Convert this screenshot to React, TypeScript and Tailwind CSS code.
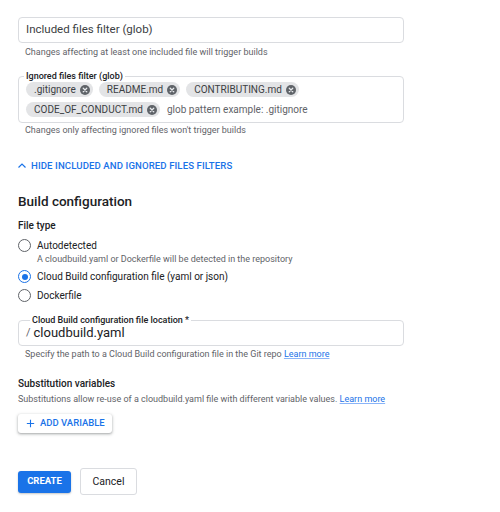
import { useState } from 'react';

const chips = ['.gitignore', 'README.md', 'CONTRIBUTING.md', 'CODE_OF_CONDUCT.md'];

function ChipClose() {
  return (
    <svg viewBox="0 0 16 16" className="h-[10px] w-[10px]">
      <circle cx="8" cy="8" r="8" fill="#5f6368" />
      <path d="M5.2 5.2 L10.8 10.8 M10.8 5.2 L5.2 10.8" stroke="#e8eaed" strokeWidth="2" strokeLinecap="round" />
    </svg>
  );
}

function Radio({ checked }: { checked: boolean }) {
  return (
    <span
      className={
        'flex h-[13px] w-[13px] shrink-0 items-center justify-center rounded-full border-[1.5px] ' +
        (checked ? 'border-[#1a73e8]' : 'border-[#5f6368]')
      }
    >
      {checked && <span className="h-[6px] w-[6px] rounded-full bg-[#1a73e8]" />}
    </span>
  );
}

export default function App() {
  const [fileType, setFileType] = useState('config');

  const options = [
    { id: 'auto', label: 'Autodetected', hint: 'A cloudbuild.yaml or Dockerfile will be detected in the repository' },
    { id: 'config', label: 'Cloud Build configuration file (yaml or json)' },
    { id: 'docker', label: 'Dockerfile' }
  ];

  return (
    <div className="h-[512px] w-[500px] bg-white pl-[18px] pt-[17px] text-[#202124]" style={{ fontFamily: 'Roboto, Arial, sans-serif' }}>
      <div className="w-[386px]">
        {/* included filter */}
        <div className="flex h-[26px] items-center rounded-[4px] border border-[#dadce0] px-[7px] text-[11.5px] text-[#3c4043]">
          Included files filter (glob)
        </div>
        <p className="mt-[3px] pl-[7px] text-[9px] leading-[12px] text-[#5f6368]">
          Changes affecting at least one included file will trigger builds
        </p>

        {/* ignored filter */}
        <div className="relative mt-[18px] rounded-[4px] border border-[#dadce0] px-[7px] pt-[5px] pb-[5px]">
          <span className="absolute -top-[6px] left-[5px] bg-white px-[2px] text-[9px] font-medium leading-[11px] text-[#202124]">
            Ignored files filter (glob)
          </span>
          <div className="flex flex-wrap items-center gap-x-[6px] gap-y-[5px]">
            {chips.map((c) => (
              <span key={c} className="flex h-[15px] items-center gap-[4px] rounded-full bg-[#e3e4e6] pl-[8px] pr-[3px] text-[10px] text-[#3c4043]">
                {c}
                <ChipClose />
              </span>
            ))}
            <span className="ml-[1px] text-[10px] text-[#5f6368]">glob pattern example: .gitignore</span>
          </div>
        </div>
        <p className="mt-[1px] pl-[7px] text-[9px] leading-[12px] text-[#5f6368]">
          Changes only affecting ignored files won't trigger builds
        </p>

        {/* toggle link */}
        <button className="mt-[23px] flex items-center gap-[3px] text-[9.6px] font-medium leading-[13px] tracking-[0.1px] text-[#1a73e8]">
          <svg viewBox="0 0 24 24" className="-ml-[2px] h-[12px] w-[12px]" fill="none" stroke="#1a73e8" strokeWidth="2.4">
            <path d="M5 15 L12 8 L19 15" />
          </svg>
          HIDE INCLUDED AND IGNORED FILES FILTERS
        </button>

        {/* build config */}
        <h2 className="mt-[20px] text-[13.5px] font-medium leading-[18px] text-[#202124]">Build configuration</h2>
        <p className="mt-[9px] text-[10px] font-medium leading-[13px]">File type</p>

        <div className="mt-[4px] flex flex-col">
          {options.map((o) => (
            <label key={o.id} onClick={() => setFileType(o.id)} className="flex items-start gap-[6px] py-[2.5px]">
              <span className="flex h-[14px] items-center">
                <Radio checked={fileType === o.id} />
              </span>
              <span className="flex flex-col">
                <span className="text-[10px] leading-[14px] text-[#202124]">{o.label}</span>
                {o.hint && <span className="text-[9px] leading-[12px] text-[#5f6368]">{o.hint}</span>}
              </span>
            </label>
          ))}
        </div>

        {/* location */}
        <div className="relative mt-[15px] flex h-[26px] items-center rounded-[4px] border border-[#dadce0] px-[7px]">
          <span className="absolute -top-[6px] left-[11px] bg-white px-[2px] text-[9px] font-medium leading-[11px] text-[#202124]">
            Cloud Build configuration file location *
          </span>
          <span className="mr-[3px] text-[11px] text-[#5f6368]">/</span>
          <span className="text-[13px] text-[#202124]">cloudbuild.yaml</span>
        </div>
        <p className="mt-[2px] pl-[7px] text-[9px] leading-[12px] text-[#5f6368]">
          Specify the path to a Cloud Build configuration file in the Git repo{' '}
          <a className="text-[#1a73e8] underline decoration-[#8ab4f8]">Learn more</a>
        </p>

        {/* substitution */}
        <p className="mt-[17px] text-[10px] font-medium leading-[13px]">Substitution variables</p>
        <p className="mt-[3px] text-[9px] leading-[12px] text-[#5f6368]">
          Substitutions allow re-use of a cloudbuild.yaml file with different variable values.{' '}
          <a className="text-[#1a73e8] underline decoration-[#8ab4f8]">Learn more</a>
        </p>
        <button className="mt-[9px] flex h-[19px] w-[94px] items-center gap-[4px] rounded-[3px] bg-white pl-[7px] text-[9.5px] font-medium text-[#1a73e8] shadow-[0_1px_2px_rgba(60,64,67,0.3),0_1px_3px_1px_rgba(60,64,67,0.15)]">
          <svg viewBox="0 0 24 24" className="h-[11px] w-[11px]" fill="none" stroke="#1a73e8" strokeWidth="2.4">
            <path d="M12 4 V20 M4 12 H20" />
          </svg>
          ADD VARIABLE
        </button>

        <div className="mt-[35px] flex items-center gap-[9px]">
          <button className="h-[22px] w-[53px] rounded-[3px] bg-[#1a73e8] text-[9.5px] font-bold text-white shadow-[0_1px_2px_rgba(60,64,67,0.3)]">
            CREATE
          </button>
          <button className="h-[27px] w-[57px] rounded-[3px] border border-[#dadce0] bg-white text-[10.5px] text-[#202124]">
            Cancel
          </button>
        </div>
      </div>
    </div>
  );
}
